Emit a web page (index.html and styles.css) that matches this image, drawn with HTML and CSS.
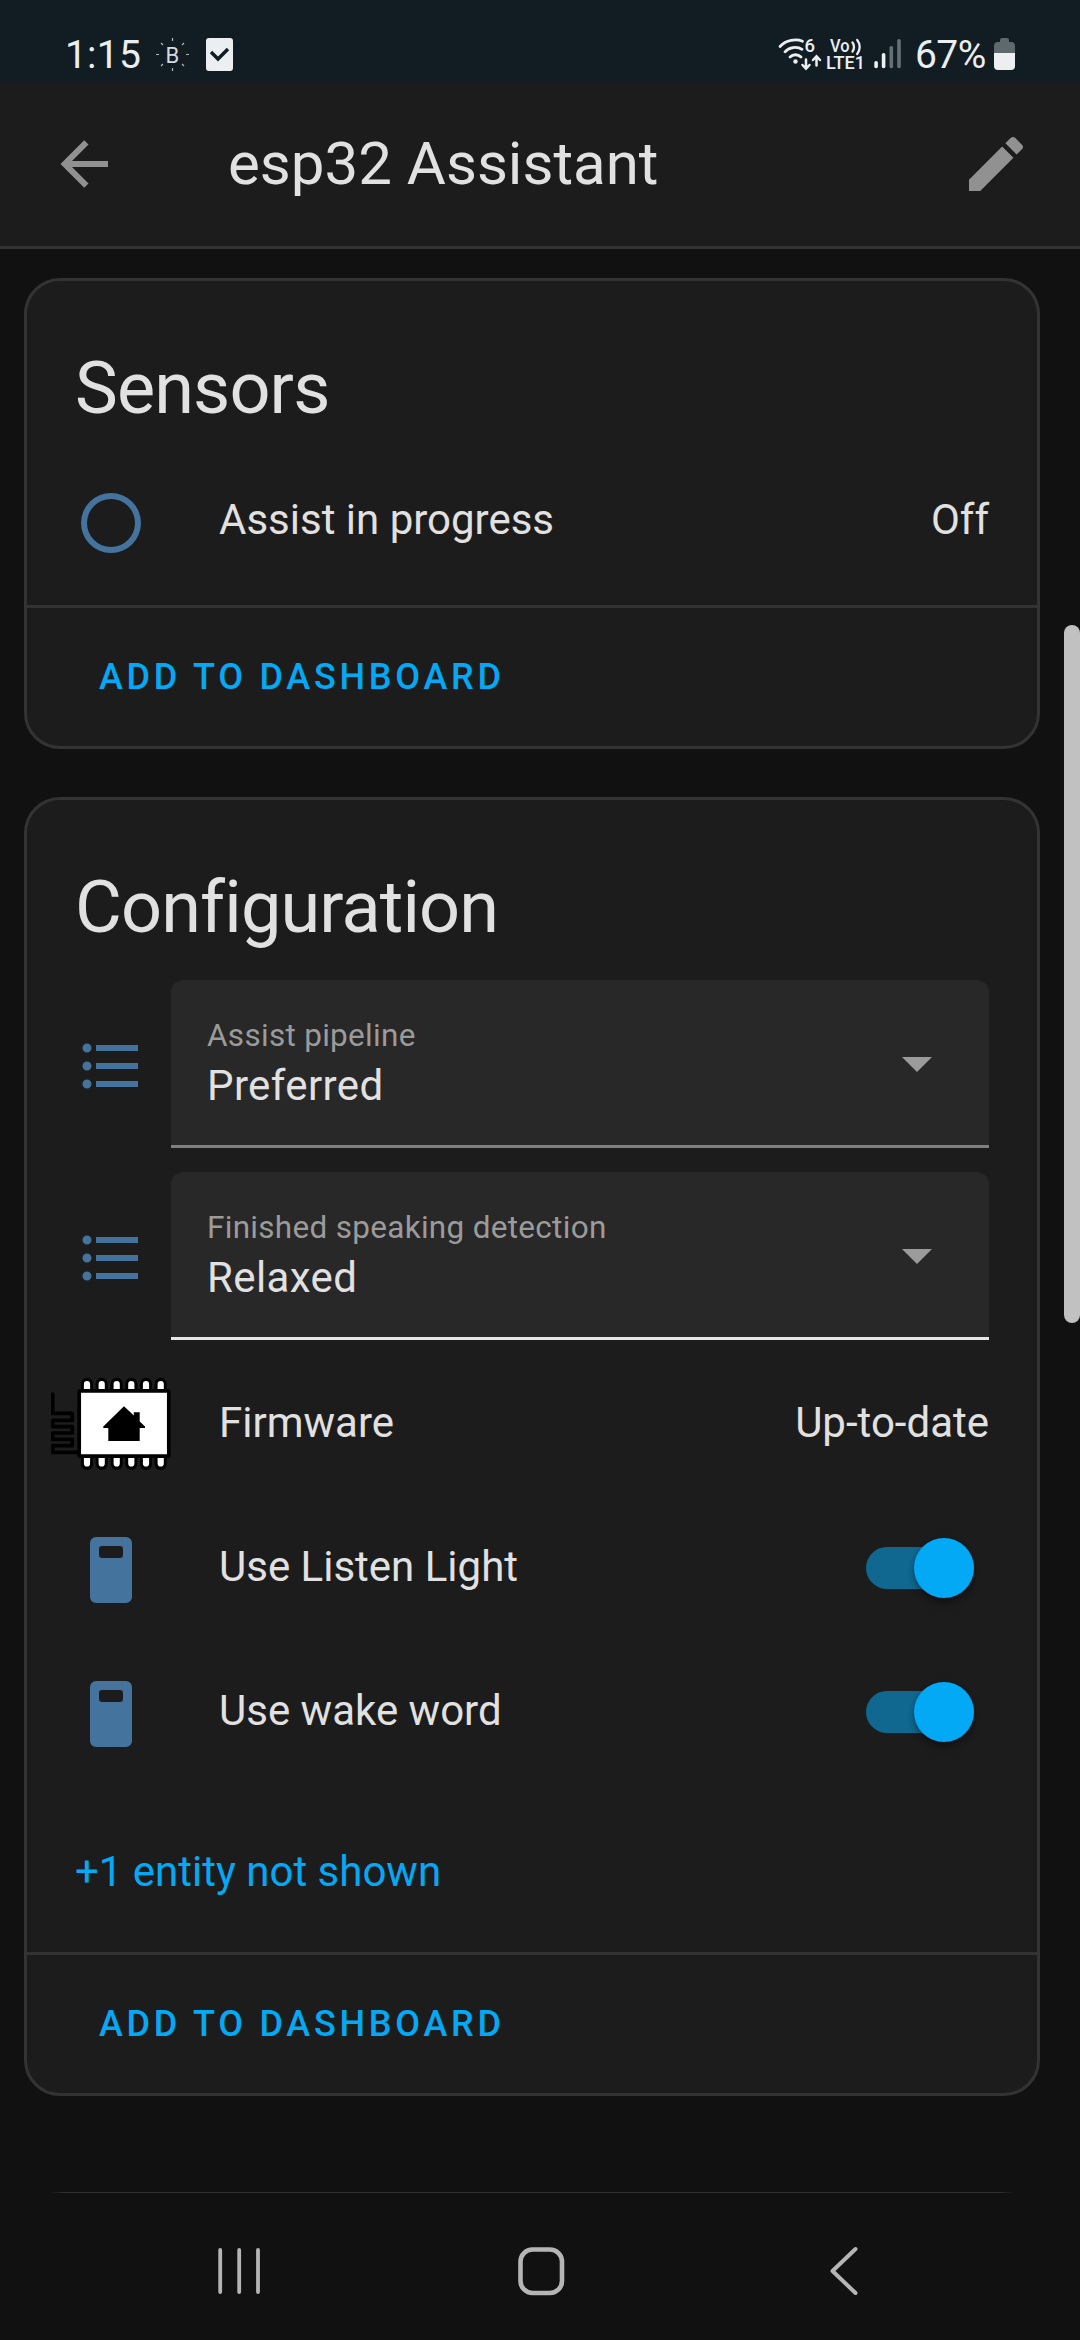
FILE: index.html
```html
<!DOCTYPE html>
<html lang="en">
<head>
<meta charset="utf-8">
<title>esp32 Assistant</title>
<link rel="stylesheet" href="styles.css">
</head>
<body>
<div class="screen">
  <div class="statusbar">
    <span class="clock">1:15</span>
    <svg class="status-left" viewBox="150 34 90 42" width="90" height="42">
      <g stroke="#aeb6b9" stroke-width="1.2">
        <path d="M172.500 38v3M172.500 68v3M156 54.500h3M186 54.500h3M161 43l2 2M184 43l-2 2M161 66l2-2M184 66l-2-2"/>
      </g>
      <text class="badge-letter" x="165.500" y="62.500">B</text>
      <rect x="206" y="38" width="27" height="33" rx="3" fill="#eceff1"/>
      <path d="M211 52l7 7 10-10" fill="none" stroke="#111d23" stroke-width="3.400"/>
    </svg>
    <svg class="status-right" viewBox="775 34 130 42" width="130" height="42">
      <g fill="none" stroke="#eceff1" stroke-width="2.800" stroke-linecap="round">
        <path d="M780 46.500C786 40 796 38.500 802.500 41.300"/>
        <path d="M785 51.800C789 47.200 797 46 802 49.300"/>
        <path d="M790 57C793 54 798 54 801 57"/>
        <path d="M806 59.500v8.500M802.500 65l3.500 3.700 3.500-3.700M816.500 65.500V57M813 60l3.500-3.700 3.500 3.700" stroke-width="2.500"/>
        <path d="M852.500 42.500c2 2.500 2 6.500 0 9M857.200 40c3.300 4 3.300 10 0 14" stroke-width="2.300"/>
      </g>
      <circle cx="795.500" cy="61.500" r="2.200" fill="#eceff1"/>
      <text class="tiny" x="804.500" y="51.800" font-size="18.500">6</text>
      <text class="tiny" x="830" y="52" font-size="17.500" textLength="19.500" lengthAdjust="spacingAndGlyphs">Vo</text>
      <text class="tiny" x="826" y="69" font-size="18.500" textLength="39" lengthAdjust="spacingAndGlyphs">LTE1</text>
      <g fill="#eceff1"><rect x="874.300" y="61" width="3.600" height="7.300" rx="1.700"/><rect x="881.800" y="53" width="3.600" height="15.300" rx="1.700"/></g>
      <g fill="#667175"><rect x="889.500" y="46" width="3.600" height="22.300" rx="1.700"/><rect x="897.200" y="39" width="3.600" height="29.300" rx="1.700"/></g>
    </svg>
    <span class="percent">67%</span>
    <svg class="battery" viewBox="0 0 21 32" width="21" height="32">
      <path d="M6 2a2 2 0 0 1 2-2h5a2 2 0 0 1 2 2v2h2a4 4 0 0 1 4 4v7H0V8a4 4 0 0 1 4-4h2z" fill="#5e696d"/>
      <path d="M0 15h21v13a4 4 0 0 1-4 4H4a4 4 0 0 1-4-4z" fill="#eceff1"/>
    </svg>
  </div>

  <header class="toolbar">
    <svg class="tool-icon" viewBox="0 0 24 24"><path d="M20,11V13H8L13.500,18.500L12.080,19.920L4.160,12L12.080,4.080L13.500,5.500L8,11H20Z"/></svg>
    <h1 class="title">esp32 Assistant</h1>
    <svg class="tool-icon" viewBox="0 0 24 24"><path d="M20.710,7.040C21.100,6.650 21.100,6 20.710,5.630L18.370,3.290C18,2.900 17.350,2.900 16.960,3.290L15.120,5.120L18.870,8.870M3,17.250V21H6.750L17.810,9.930L14.060,6.180L3,17.250Z"/></svg>
  </header>

  <main class="content">
    <section class="card">
      <h2 class="card-title">Sensors</h2>
      <div class="rows">
        <div class="row">
          <span class="icon"><svg viewBox="0 0 24 24"><path d="M12,20A8,8 0 0,1 4,12A8,8 0 0,1 12,4A8,8 0 0,1 20,12A8,8 0 0,1 12,20M12,2A10,10 0 0,0 2,12A10,10 0 0,0 12,22A10,10 0 0,0 22,12A10,10 0 0,0 12,2Z"/></svg></span>
          <span class="name">Assist in progress</span>
          <span class="state">Off</span>
        </div>
      </div>
      <div class="actions"><span class="button">ADD TO DASHBOARD</span></div>
    </section>

    <section class="card">
      <h2 class="card-title">Configuration</h2>
      <div class="rows">
        <div class="row">
          <span class="icon"><svg viewBox="0 0 24 24"><path d="M7,5H21V7H7V5M7,13V11H21V13H7M4,4.500A1.500,1.500 0 0,1 5.500,6A1.500,1.500 0 0,1 4,7.500A1.500,1.500 0 0,1 2.500,6A1.500,1.500 0 0,1 4,4.500M4,10.500A1.500,1.500 0 0,1 5.500,12A1.500,1.500 0 0,1 4,13.500A1.500,1.500 0 0,1 2.500,12A1.500,1.500 0 0,1 4,10.500M7,19V17H21V19H7M4,16.500A1.500,1.500 0 0,1 5.500,18A1.500,1.500 0 0,1 4,19.500A1.500,1.500 0 0,1 2.500,18A1.500,1.500 0 0,1 4,16.500Z"/></svg></span>
          <div class="select">
            <div class="field"><span class="label">Assist pipeline</span><span class="value">Preferred</span></div>
            <svg class="arrow" viewBox="0 0 30 15"><path d="M0 0h30L15 15z"/></svg>
          </div>
        </div>
        <div class="row">
          <span class="icon"><svg viewBox="0 0 24 24"><path d="M7,5H21V7H7V5M7,13V11H21V13H7M4,4.500A1.500,1.500 0 0,1 5.500,6A1.500,1.500 0 0,1 4,7.500A1.500,1.500 0 0,1 2.500,6A1.500,1.500 0 0,1 4,4.500M4,10.500A1.500,1.500 0 0,1 5.500,12A1.500,1.500 0 0,1 4,13.500A1.500,1.500 0 0,1 2.500,12A1.500,1.500 0 0,1 4,10.500M7,19V17H21V19H7M4,16.500A1.500,1.500 0 0,1 5.500,18A1.500,1.500 0 0,1 4,19.500A1.500,1.500 0 0,1 2.500,18A1.500,1.500 0 0,1 4,16.500Z"/></svg></span>
          <div class="select focused">
            <div class="field"><span class="label">Finished speaking detection</span><span class="value">Relaxed</span></div>
            <svg class="arrow" viewBox="0 0 30 15"><path d="M0 0h30L15 15z"/></svg>
          </div>
        </div>
        <div class="row">
          <span class="brand">
            <svg viewBox="51 1364 120 120" width="120" height="120">
              <path d="M52.700 1394v19.300h19.600v7H52.700v6.400h19.600v6.300H52.700v6.300h19.600v6.400H52.700v6.600H80" fill="none" stroke="#000" stroke-width="3.700" stroke-linejoin="round" stroke-linecap="round"/>
              <g stroke="#000" stroke-width="12" stroke-linecap="round"><path d="M87 1383.700v80.300M101.700 1383.700v80.300M116.700 1383.700v80.300M131.300 1383.700v80.300M146 1383.700v80.300M160.700 1383.700v80.300"/></g>
              <g stroke="#fff" stroke-width="6.200" stroke-linecap="round"><path d="M87 1384v79.500M101.700 1384v79.500M116.700 1384v79.500M131.300 1384v79.500M146 1384v79.500M160.700 1384v79.500"/></g>
              <rect x="79.200" y="1390.800" width="89.600" height="65.400" rx="1.500" fill="#fff" stroke="#000" stroke-width="3.700"/>
              <path d="M124 1406.300L133.800 1415.500V1412.300H139.700V1421.500L145 1426.500V1428H139.700V1441H108.300V1428H103.300V1426.500Z"/>
            </svg>
          </span>
          <span class="name">Firmware</span>
          <span class="state">Up-to-date</span>
        </div>
        <div class="row">
          <span class="icon"><svg viewBox="0 0 24 24"><path fill-rule="evenodd" d="M7 1h10a2 2 0 0 1 2 2v18a2 2 0 0 1-2 2H7a2 2 0 0 1-2-2V3a2 2 0 0 1 2-2M9 4a1 1 0 0 0-1 1v2a1 1 0 0 0 1 1h6a1 1 0 0 0 1-1V5a1 1 0 0 0-1-1z"/></svg></span>
          <span class="name">Use Listen Light</span>
          <span class="switch"><span class="knob"></span></span>
        </div>
        <div class="row">
          <span class="icon"><svg viewBox="0 0 24 24"><path fill-rule="evenodd" d="M7 1h10a2 2 0 0 1 2 2v18a2 2 0 0 1-2 2H7a2 2 0 0 1-2-2V3a2 2 0 0 1 2-2M9 4a1 1 0 0 0-1 1v2a1 1 0 0 0 1 1h6a1 1 0 0 0 1-1V5a1 1 0 0 0-1-1z"/></svg></span>
          <span class="name">Use wake word</span>
          <span class="switch"><span class="knob"></span></span>
        </div>
      </div>
      <div class="more">+1 entity not shown</div>
      <div class="actions"><span class="button">ADD TO DASHBOARD</span></div>
    </section>
  </main>

  <nav class="navbar">
    <svg viewBox="0 0 1080 148" width="1080" height="148">
      <defs><linearGradient id="edge" x1="0" x2="1"><stop offset="0" stop-color="#333" stop-opacity="0"/><stop offset=".015" stop-color="#303030"/><stop offset=".985" stop-color="#303030"/><stop offset="1" stop-color="#333" stop-opacity="0"/></linearGradient></defs>
      <rect x="50" y="0" width="964" height="1" fill="url(#edge)"/>
      <g fill="none" stroke="#b5b5b5" stroke-width="4" stroke-linecap="round" stroke-linejoin="round">
        <path stroke-width="3.800" d="M220.200 58v42M239.200 58v42M258 58v42"/>
        <rect x="520.500" y="57.500" width="41.500" height="43.500" rx="12" stroke-width="4.600"/>
        <path d="M855.500 57L832.500 79L855.500 101"/>
      </g>
    </svg>
  </nav>
  <div class="scrollbar"></div>
</div>
</body>
</html>
```
FILE: styles.css
```css
* { box-sizing: border-box; margin: 0; padding: 0; }
body { background: #111; font-family: Roboto, sans-serif; color: #e1e1e1; }
svg { display: block; }

.screen {
  position: relative;
  width: 1080px;
  height: 2340px;
  display: flex;
  flex-direction: column;
  overflow: hidden;
  background: #111;
}

/* System status bar */
.statusbar {
  height: 81px;
  flex: none;
  display: flex;
  align-items: flex-start;
  padding: 31px 65px 0 65px;
  background: #111d23;
  color: #eceff1;
  font-size: 39px;
  line-height: 48px;
}
.clock { width: 85px; letter-spacing: 0.2px; }
.status-left, .status-right { margin-top: 3px; }
.status-right { margin-left: auto; }
.percent { width: 73px; margin-left: 10px; white-space: nowrap; letter-spacing: -0.6px; }
.battery { margin: 7px 0 0 6px; }
.badge-letter { font-size: 22px; fill: #d5dadc; }
.tiny { fill: #eceff1; font-weight: 500; }

/* App toolbar */
.toolbar {
  height: 168px;
  flex: none;
  display: flex;
  align-items: center;
  padding: 0 48px;
  background: #1c1c1c;
  border-bottom: 3px solid #333;
}
.tool-icon { width: 72px; height: 72px; fill: #919191; }
.title { flex: 1; padding-left: 108px; font-size: 60px; font-weight: 400; line-height: 72px; }

/* Cards */
.content {
  flex: 1;
  display: flex;
  flex-direction: column;
  gap: 48px;
  padding: 29px 40px 0 24px;
}
.card {
  background: #1c1c1c;
  border: 3px solid #333;
  border-radius: 36px;
}
.card-title {
  padding: 36px 48px 0;
  height: 156px;
  font-size: 72px;
  font-weight: 400;
  line-height: 144px;
  letter-spacing: -0.864px;
}
.rows {
  display: flex;
  flex-direction: column;
  gap: 24px;
  padding: 24px 48px;
}
.row {
  display: flex;
  align-items: center;
  min-height: 120px;
  margin-left: -24px;
  font-size: 42px;
  line-height: 60px;
}
.icon, .brand { width: 120px; flex: none; }
.icon { padding: 4px 24px 0; }
.icon svg { width: 72px; height: 72px; fill: #44739e; }
.name, .state { padding-bottom: 2px; }
.name { flex: 1; padding-left: 48px; }

.select {
  flex: 1;
  height: 168px;
  display: flex;
  align-items: center;
  justify-content: space-between;
  padding: 0 57px 0 36px;
  background: #282828;
  border-bottom: 3px solid #808080;
  border-radius: 12px 12px 0 0;
}
.select.focused { border-bottom-color: #e6e6e6; }
.field { display: flex; flex-direction: column; padding-top: 1px; }
.label { font-size: 31.5px; line-height: 44px; color: #9b9b9b; letter-spacing: 0.295px; }
.value { line-height: 55px; letter-spacing: 0.39px; }
.arrow { width: 30px; height: 15px; margin-top: 4px; fill: #9b9b9b; }

.switch {
  width: 108px;
  height: 42px;
  margin-right: 15px;
  display: flex;
  align-items: center;
  justify-content: flex-end;
  border-radius: 21px;
  background: #106890;
}
.knob {
  width: 60px;
  height: 60px;
  flex: none;
  border-radius: 50%;
  background: #03a9f4;
  box-shadow: 0 6px 10px -2px rgba(0, 0, 0, 0.3), 0 2px 6px rgba(0, 0, 0, 0.2);
}

.more { height: 156px; padding: 46px 48px 0; font-size: 42px; line-height: 60px; color: #03a9f4; }
.actions {
  height: 141px;
  display: flex;
  align-items: center;
  padding-left: 72px;
  border-top: 3px solid #333;
}
.button { font-size: 36px; font-weight: 500; line-height: 54px; letter-spacing: 3.75px; color: #03a9f4; }

/* System navigation */
.navbar { height: 148px; flex: none; }

.scrollbar {
  position: absolute;
  right: 0;
  top: 625px;
  width: 16px;
  height: 698px;
  border-radius: 8px;
  background: #c1c1c1;
}
```
